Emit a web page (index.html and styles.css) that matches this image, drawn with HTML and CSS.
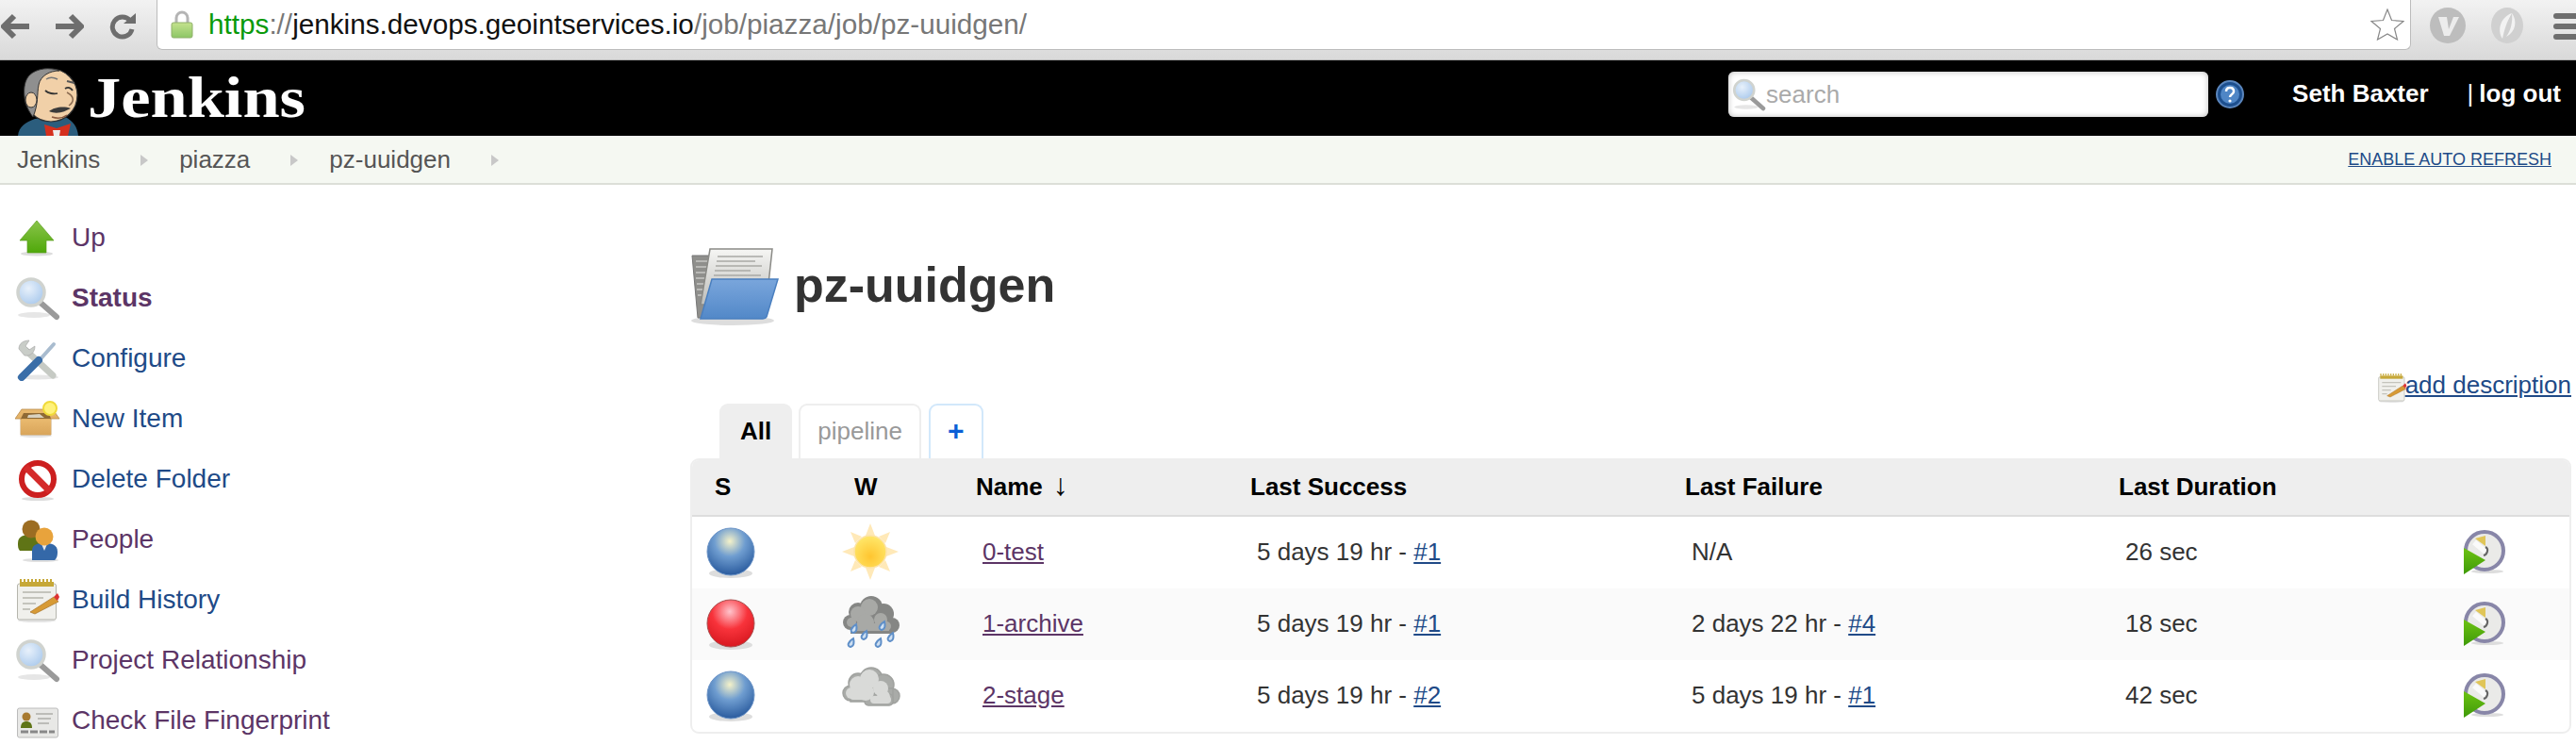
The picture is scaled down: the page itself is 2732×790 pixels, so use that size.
FILE: index.html
```html
<!DOCTYPE html>
<html>
<head>
  <title>pz-uuidgen [Jenkins]</title>
  <link rel="stylesheet" href="styles.css">
</head>
<body>

<svg class="sprite" xmlns="http://www.w3.org/2000/svg">
  <defs>
    <linearGradient id="g-green" x1="0" y1="0" x2="0" y2="1"><stop offset="0" stop-color="#8ac44a"/><stop offset="1" stop-color="#4fa80a"/></linearGradient>
    <linearGradient id="g-play" x1="0" y1="0" x2="0" y2="1"><stop offset="0" stop-color="#6cc212"/><stop offset="1" stop-color="#3f9a08"/></linearGradient>
    <linearGradient id="g-lock" x1="0" y1="0" x2="0" y2="1"><stop offset="0" stop-color="#c4e28e"/><stop offset="1" stop-color="#8cc665"/></linearGradient>
    <linearGradient id="g-paper" x1="0" y1="0" x2="0" y2="1"><stop offset="0" stop-color="#f6f6f4"/><stop offset="1" stop-color="#bdbdb9"/></linearGradient>
    <radialGradient id="g-lens" cx="0.4" cy="0.35" r="0.7"><stop offset="0" stop-color="#e8f1fb"/><stop offset="1" stop-color="#a8c8ec"/></radialGradient>
    <radialGradient id="g-blue" cx="0.48" cy="0.28" r="0.72"><stop offset="0" stop-color="#f5f2c9"/><stop offset="0.45" stop-color="#6f9dd0"/><stop offset="1" stop-color="#2a5b9e"/></radialGradient>
    <radialGradient id="g-red" cx="0.48" cy="0.25" r="0.75"><stop offset="0" stop-color="#ffc4cc"/><stop offset="0.5" stop-color="#f8333b"/><stop offset="1" stop-color="#d81820"/></radialGradient>
    <radialGradient id="g-sun" cx="0.5" cy="0.65" r="0.6"><stop offset="0" stop-color="#ffc530"/><stop offset="1" stop-color="#ffe566"/></radialGradient>
    <linearGradient id="g-folder" x1="0" y1="0" x2="0" y2="1"><stop offset="0" stop-color="#7aa6dc"/><stop offset="1" stop-color="#5288c8"/></linearGradient>
    <linearGradient id="g-box" x1="0" y1="0" x2="0" y2="1"><stop offset="0" stop-color="#e9b96e"/><stop offset="1" stop-color="#d9a55a"/></linearGradient>

    <symbol id="i-up" viewBox="0 0 48 48">
      <ellipse cx="23" cy="41" rx="17" ry="2.5" fill="#ddd"/>
      <path d="M23 6 41 27H33V40H13V27H5Z" fill="url(#g-green)" stroke="#5a9e1c" stroke-width=".7"/>
    </symbol>
    <symbol id="i-search" viewBox="0 0 48 48">
      <ellipse cx="20" cy="42" rx="17" ry="3" fill="#e6e6e6"/>
      <path d="M27 29 44 44" stroke="#9a9a9a" stroke-width="6" stroke-linecap="round"/>
      <circle cx="17" cy="18" r="14" fill="url(#g-lens)" stroke="#d0d3cf" stroke-width="3.5"/>
    </symbol>
    <symbol id="i-configure" viewBox="0 0 48 48">
      <ellipse cx="24" cy="44" rx="22" ry="2.5" fill="#e6e6e6"/>
      <path d="M12 16 40 42" stroke="#c6cac4" stroke-width="7" stroke-linecap="round"/>
      <path d="M4 14C4 8 9 5 15 5L11 11 15 15 21 11C21 18 16 22 10 21Z" fill="#c9cdc8" stroke="#aaa" stroke-width=".7"/>
      <path d="M41 9 24 28" stroke="#a9bccf" stroke-width="4" stroke-linecap="round"/>
      <path d="M25 26 7 44" stroke="#3a6ea8" stroke-width="8" stroke-linecap="round"/>
    </symbol>
    <symbol id="i-new" viewBox="0 0 48 48">
      <ellipse cx="22" cy="42" rx="17" ry="2" fill="#e6e6e6"/>
      <path d="M0 24 7 14H40L47 24H38V41H6V24Z" fill="url(#g-box)" stroke="#b78a4a" stroke-width=".8"/>
      <path d="M9 18H36L38 24H6Z" fill="#8f6a35"/>
      <path d="M14 20 26 19 31 23H13Z" fill="#d9d2c0"/>
      <path d="M6 25H38V41H6Z" fill="url(#g-box)"/>
      <circle cx="37" cy="13" r="7" fill="#fff27a" stroke="#f0da3a" stroke-width="2"/>
    </symbol>
    <symbol id="i-delete" viewBox="0 0 48 48">
      <ellipse cx="24" cy="45" rx="17" ry="2" fill="#ddd"/>
      <circle cx="24" cy="24" r="17" fill="#fff" stroke="#cc1f1f" stroke-width="6"/>
      <path d="M11 11 37 37" stroke="#d42a2a" stroke-width="7"/>
    </symbol>
    <symbol id="i-people" viewBox="0 0 48 48">
      <ellipse cx="27" cy="46" rx="19" ry="2" fill="#e0e0e0"/>
      <path d="M3 28C3 20 10 19 17 19S31 21 31 28V36H5C3 34 3 31 3 28Z" fill="#5f7416"/>
      <circle cx="17" cy="13" r="9.500" fill="#9c6d22"/>
      <path d="M18 46V36C18 29 24 28 31 28S45 29 45 37C45 42 44 44 42 46Z" fill="#3468a8"/>
      <path d="M28 29H34L31 36Z" fill="#e8e8e8"/>
      <circle cx="31" cy="21" r="9.500" fill="#e8a33c"/>
    </symbol>
    <symbol id="i-notepad" viewBox="0 0 48 48">
      <ellipse cx="23" cy="46" rx="20" ry="2" fill="#e4e4e4"/>
      <rect x="2.500" y="7" width="41" height="38" rx="2" fill="#f0f0ec" stroke="#b5b5ad"/>
      <rect x="5" y="5" width="36" height="5" fill="#c6a838"/>
      <path d="M6 5V2M10 5V2M14 5V2M18 5V2M22 5V2M26 5V2M30 5V2M34 5V2M38 5V2" stroke="#c6a838" stroke-width="2"/>
      <path d="M8 16H38M8 22H30M8 28H22M8 34H16" stroke="#c4c4bc" stroke-width="2"/>
      <path d="M16 37 41 21 46 26 21 39Z" fill="#d79a35" stroke="#a8742a" stroke-width=".7"/>
      <path d="M41 21 45 17 47 21 45 25Z" fill="#d33"/>
    </symbol>
    <symbol id="i-card" viewBox="0 0 48 48">
      <rect x="2.500" y="11" width="43" height="31" rx="2" fill="#e8e8e6" stroke="#bbb"/>
      <path d="M6 36H42" stroke="#888" stroke-width="3" stroke-dasharray="8 2"/>
      <circle cx="12" cy="20" r="4.500" fill="#a87a30"/>
      <path d="M6 32C6 26 9 25 12 25S18 26 18 32Z" fill="#5f7416"/>
      <path d="M22 17H40M24 22H38M24 27H36" stroke="#bcbcb8" stroke-width="2"/>
    </symbol>
    <symbol id="i-folder" viewBox="0 0 94 82">
      <ellipse cx="45" cy="77" rx="44" ry="5" fill="#ddd"/>
      <path d="M2 8H22L24 74H8Z" fill="#8f8f8c" stroke="#777"/>
      <path d="M6 14H22M6 20H22M6 26H20M6 32H20M7 38H20M7 44H20M8 50H20" stroke="#c8c8c4" stroke-width="1.500"/>
      <path d="M21 1H87L83 38 45 60H11Z" fill="url(#g-paper)" stroke="#8a8a86" stroke-width="1.500"/>
      <path d="M29 9H77M28 14H69M27 19H76M26 24H64M25 29H75" stroke="#a9a9a5" stroke-width="1.500"/>
      <path d="M23 33H93L81 73C80 75 79 75 77 75H11Z" fill="url(#g-folder)" stroke="#4a7fbf" stroke-width="1.500"/>
    </symbol>
    <symbol id="i-ball-blue" viewBox="0 0 52 56">
      <ellipse cx="26" cy="49" rx="23" ry="5" fill="#ddd"/>
      <circle cx="26" cy="26" r="25" fill="url(#g-blue)" stroke="#6d95c8"/>
    </symbol>
    <symbol id="i-ball-red" viewBox="0 0 52 56">
      <ellipse cx="26" cy="49" rx="23" ry="5" fill="#ddd"/>
      <circle cx="26" cy="26" r="25" fill="url(#g-red)" stroke="#a85050"/>
    </symbol>
    <symbol id="i-sun" viewBox="0 0 60 60">
      <g fill="#ffe9b8">
        <path d="M30 0 35 13H25Z"/><path d="M30 60 25 47H35Z"/><path d="M0 30 13 25V35Z"/><path d="M60 30 47 35V25Z"/>
        <path d="M9 9 21 14 14 21Z"/><path d="M51 9 46 21 39 14Z"/><path d="M9 51 14 39 21 46Z"/><path d="M51 51 39 46 46 39Z"/>
      </g>
      <circle cx="30" cy="30" r="17" fill="url(#g-sun)" stroke="#fde3a6" stroke-width="1.500"/>
    </symbol>
    <symbol id="i-cloud" viewBox="0 0 62 48">
      <g fill="#a9aba8" stroke="#a0a29f" stroke-width="1.500">
        <circle cx="31" cy="14" r="12"/><circle cx="17" cy="18" r="10"/><circle cx="44" cy="20" r="11"/><circle cx="9" cy="29" r="8"/><circle cx="53" cy="32" r="8"/><rect x="9" y="24" width="45" height="14"/><rect x="24" y="30" width="30" height="12" rx="4"/>
      </g>
      <g fill="#d9dad8">
        <circle cx="29" cy="14" r="10"/><circle cx="17" cy="20" r="9"/><circle cx="10" cy="29" r="6"/><circle cx="25" cy="28" r="9"/><circle cx="41" cy="24" r="8"/><circle cx="44" cy="33" r="7"/><rect x="30" y="32" width="22" height="8" rx="4"/><rect x="8" y="27" width="20" height="9" rx="4"/>
      </g>
    </symbol>
    <symbol id="i-storm" viewBox="0 0 62 60">
      <g fill="#858684">
        <circle cx="31" cy="13" r="12"/><circle cx="17" cy="18" r="10"/><circle cx="44" cy="20" r="11"/><circle cx="9" cy="29" r="8"/><circle cx="53" cy="32" r="8"/><rect x="9" y="24" width="45" height="17"/>
      </g>
      <g fill="#a8a9a6">
        <circle cx="29" cy="13" r="9"/><circle cx="17" cy="20" r="8"/><circle cx="10" cy="29" r="5"/><circle cx="25" cy="29" r="9"/><circle cx="41" cy="26" r="7"/><circle cx="47" cy="33" r="5"/><rect x="10" y="30" width="40" height="8"/>
      </g>
      <g fill="#cfe0f2" stroke="#5f8fc8" stroke-width="2">
        <path d="M15 31C16 35 16 39 12 40 8 39 9 35 15 31Z"/>
        <path d="M45 28C46 32 46 36 42 37 38 36 39 32 45 28Z"/>
        <path d="M26 38C27 42 27 46 23 47 19 46 20 42 26 38Z"/>
        <path d="M54 40C55 44 55 48 51 49 47 48 48 44 54 40Z"/>
        <path d="M12 46C13 50 13 54 9 55 5 54 6 50 12 46Z"/>
        <path d="M41 46C42 50 42 54 38 55 34 54 35 50 41 46Z"/>
      </g>
    </symbol>
    <symbol id="i-build" viewBox="0 0 46 48">
      <ellipse cx="26" cy="45" rx="17" ry="2" fill="#ddd"/>
      <circle cx="23" cy="23" r="20" fill="#eaeae8" stroke="#8886a8" stroke-width="4"/>
      <path d="M13 10 24 7V18Z" fill="#e0c558"/>
      <path d="M12 14 24 24" stroke="#fafafa" stroke-width="6"/>
      <path d="M24 19C28 21 26 27 22 28" fill="none" stroke="#666" stroke-width="2"/>
      <path d="M1 20 24 33 1 48Z" fill="url(#g-play)"/>
    </symbol>
    <symbol id="i-help" viewBox="0 0 30 30">
      <circle cx="15" cy="15" r="14" fill="#1d4f8e" stroke="#5b86bd" stroke-width="2"/>
      <circle cx="15" cy="15" r="10" fill="#4f86c6"/>
      <path d="M11 12C11 9 13 8 15 8S19 9 19 12C19 15 15 15 15 18" fill="none" stroke="#fff" stroke-width="2.500"/>
      <circle cx="15" cy="22" r="1.600" fill="#fff"/>
    </symbol>
  </defs>
</svg>

<div class="toolbar">
  <svg class="nav-icon" viewBox="0 0 32 28"><path d="M14 3 3 14 14 25M4 14H30" fill="none" stroke="#6e6e6e" stroke-width="6"/></svg>
  <svg class="nav-icon" viewBox="0 0 32 28"><path d="M18 3 29 14 18 25M28 14H2" fill="none" stroke="#6e6e6e" stroke-width="6"/></svg>
  <svg class="nav-icon reload" viewBox="0 0 28 28"><path d="M22 8A10.500 10.500 0 1 0 24 17" fill="none" stroke="#6e6e6e" stroke-width="5"/><path d="M15 11H28V0Z" fill="#6e6e6e"/></svg>
  <div class="urlbox">
    <svg class="lock" viewBox="0 0 24 30"><path d="M6 14V8A6 6 0 0 1 18 8V14" fill="none" stroke="#b4b4b4" stroke-width="3"/><rect x="1" y="13" width="22" height="16" rx="2" fill="url(#g-lock)" stroke="#8fb06a"/></svg>
    <span class="url"><span class="url-https">https</span><span class="url-path">://</span>jenkins.devops.geointservices.io<span class="url-path">/job/piazza/job/pz-uuidgen/</span></span>
    <svg class="star" viewBox="0 0 36 34"><path d="M18 1 22.500 12.500 35 13.500 25.500 21.500 28.500 33 18 27 7.500 33 10.500 21.500 1 13.500 13.500 12.500Z" fill="#fff" stroke="#888" stroke-width="1.200"/></svg>
  </div>
  <svg class="ext" viewBox="0 0 38 38"><circle cx="19" cy="19" r="19" fill="#bdbdbd"/><path d="M9 10H18L20 23 25 10H31L21 30H15Z" fill="#ececec"/></svg>
  <svg class="ext" viewBox="0 0 38 38"><ellipse cx="19" cy="19" rx="17" ry="19" fill="#d0d0d0"/><path d="M24 6C12 10 8 24 14 33 16 24 18 16 24 6Z" fill="#f2f2f2"/><path d="M24 6C30 14 28 26 18 31 23 24 25 15 24 6Z" fill="#f2f2f2"/></svg>
  <div class="menu"><span></span><span></span><span></span></div>
</div>

<div class="header">
  <svg class="butler" viewBox="0 0 64 72">
    <path d="M0 72C1 62 8 58 18 54L50 52C58 56 63 62 64 72Z" fill="#2b5d7d"/>
    <ellipse cx="35" cy="29" rx="28" ry="28" fill="#f1d0a8" stroke="#333" stroke-width="1.200"/>
    <path d="M16 52C6 40 3 18 12 8 20 0 34 -1 44 3 34 3 24 8 22 18 20 28 22 38 16 52Z" fill="#8f8f8f" stroke="#333"/>
    <ellipse cx="14" cy="34" rx="6" ry="8" fill="#f1d0a8" stroke="#333"/>
    <path d="M29 24C32 27 38 28 42 27M50 22C53 20 56 21 58 24" fill="none" stroke="#333" stroke-width="1.800"/>
    <path d="M52 14 60 16" stroke="#555" stroke-width="2"/>
    <path d="M30 12C33 10 38 10 42 12" fill="none" stroke="#777" stroke-width="1.500"/>
    <path d="M52 26C60 30 60 36 54 40" fill="none" stroke="#8a6a50" stroke-width="1.500"/>
    <path d="M33 46C38 42 48 40 56 43 50 46 42 50 33 46Z" fill="#3a3a3a"/>
    <path d="M36 52C42 54 48 53 52 50" fill="none" stroke="#8a5a40" stroke-width="1.500"/>
    <path d="M28 60 41 64 56 59 53 72H30Z" fill="#d5301e"/>
    <path d="M37 66H45L44 72H38Z" fill="#eee"/>
  </svg>
  <div class="title">Jenkins</div>
  <div class="header-right">
    <div class="searchbox">
      <svg class="search-icon" viewBox="0 0 48 48"><use href="#i-search"/></svg>
      <span>search</span>
    </div>
    <svg class="help" viewBox="0 0 30 30"><use href="#i-help"/></svg>
    <span class="user">Seth Baxter</span>
    <span class="logout"><span class="pipe">|</span>log out</span>
  </div>
</div>

<div class="breadcrumbs">
  <span class="crumb">Jenkins</span><i class="sep"></i>
  <span class="crumb">piazza</span><i class="sep"></i>
  <span class="crumb">pz-uuidgen</span><i class="sep"></i>
  <a class="refresh" href="#">ENABLE AUTO REFRESH</a>
</div>

<div class="page">
  <div class="side">
    <div class="task"><svg class="task-icon"><use href="#i-up"/></svg><span class="visited">Up</span></div>
    <div class="task"><svg class="task-icon"><use href="#i-search"/></svg><span class="visited bold">Status</span></div>
    <div class="task"><svg class="task-icon"><use href="#i-configure"/></svg><span class="link">Configure</span></div>
    <div class="task"><svg class="task-icon"><use href="#i-new"/></svg><span class="link">New Item</span></div>
    <div class="task"><svg class="task-icon"><use href="#i-delete"/></svg><span class="link">Delete Folder</span></div>
    <div class="task"><svg class="task-icon"><use href="#i-people"/></svg><span class="visited">People</span></div>
    <div class="task"><svg class="task-icon"><use href="#i-notepad"/></svg><span class="link">Build History</span></div>
    <div class="task"><svg class="task-icon"><use href="#i-search"/></svg><span class="visited">Project Relationship</span></div>
    <div class="task"><svg class="task-icon"><use href="#i-card"/></svg><span class="visited">Check File Fingerprint</span></div>
  </div>

  <div class="main">
    <div class="job-title">
      <svg class="folder"><use href="#i-folder"/></svg>
      <h1>pz-uuidgen</h1>
    </div>

    <div class="description">
      <svg class="desc-icon" viewBox="0 0 48 48"><use href="#i-notepad"/></svg><a href="#">add description</a>
    </div>

    <div class="tabs">
      <div class="tab active">All</div>
      <div class="tab">pipeline</div>
      <div class="tab add">+</div>
    </div>

    <div class="projects">
      <table>
        <colgroup>
          <col class="c-s"><col class="c-w"><col class="c-name"><col class="c-success"><col class="c-failure"><col class="c-duration"><col>
        </colgroup>
        <thead>
          <tr><th>S</th><th>W</th><th>Name <span class="arrow">↓</span></th><th>Last Success</th><th>Last Failure</th><th>Last Duration</th><th></th></tr>
        </thead>
        <tbody>
          <tr>
            <td class="ico-s"><svg class="ball"><use href="#i-ball-blue"/></svg></td>
            <td class="ico-w"><svg class="weather sun"><use href="#i-sun"/></svg></td>
            <td><a class="visited" href="#">0-test</a></td>
            <td>5 days 19 hr - <a href="#">#1</a></td>
            <td>N/A</td>
            <td>26 sec</td>
            <td class="ico-b"><svg class="build"><use href="#i-build"/></svg></td>
          </tr>
          <tr class="odd">
            <td class="ico-s"><svg class="ball"><use href="#i-ball-red"/></svg></td>
            <td class="ico-w"><svg class="weather storm"><use href="#i-storm"/></svg></td>
            <td><a class="visited" href="#">1-archive</a></td>
            <td>5 days 19 hr - <a href="#">#1</a></td>
            <td>2 days 22 hr - <a href="#">#4</a></td>
            <td>18 sec</td>
            <td class="ico-b"><svg class="build"><use href="#i-build"/></svg></td>
          </tr>
          <tr>
            <td class="ico-s"><svg class="ball"><use href="#i-ball-blue"/></svg></td>
            <td class="ico-w"><svg class="weather cloud"><use href="#i-cloud"/></svg></td>
            <td><a class="visited" href="#">2-stage</a></td>
            <td>5 days 19 hr - <a href="#">#2</a></td>
            <td>5 days 19 hr - <a href="#">#1</a></td>
            <td>42 sec</td>
            <td class="ico-b"><svg class="build"><use href="#i-build"/></svg></td>
          </tr>
        </tbody>
      </table>
    </div>
  </div>
</div>

</body>
</html>
```

FILE: styles.css
```css
html, body {
  margin: 0;
  height: 100%;
  overflow: hidden;
  background: #fff;
}
body {
  font-family: "Liberation Sans", Arial, sans-serif;
  font-size: 26px;
  color: #333;
}
svg { display: block; flex: none; }
.sprite { width: 0; height: 0; }
a { color: #204a87; }

/* browser bar */
.toolbar {
  height: 63px;
  border-bottom: 1px solid #b4b4b4;
  background: linear-gradient(#f2f2f2, #d9d9d9);
  display: flex;
  align-items: flex-start;
}
.nav-icon { width: 32px; height: 28px; margin: 14px 0 0 1px; }
.nav-icon + .nav-icon { margin-left: 24px; }
.nav-icon.reload { width: 28px; margin-left: 27px; }
.urlbox {
  width: 2391px;
  height: 52px;
  margin-left: 22px;
  background: #fff;
  border: 1px solid #bcbcbc;
  border-top: 0;
  border-radius: 0 0 6px 6px;
  display: flex;
  align-items: center;
}
.lock { width: 24px; height: 30px; margin-left: 14px; }
.url { margin-left: 16px; font-size: 29.7px; color: #111; flex: 1; }
.url-https { color: #0a9a0a; }
.url-path { color: #777; }
.star { width: 36px; height: 34px; margin-right: 6px; }
.ext { width: 38px; height: 38px; margin: 8px 0 0 20px; }
.ext + .ext { margin-left: 25px; }
.menu { width: 24px; margin: 14px 0 0 30px; display: flex; flex-direction: column; gap: 5px; }
.menu span { height: 6px; background: #6e6e6e; border-radius: 3px 0 0 3px; }

/* black header */
.header {
  height: 80px;
  background: #000;
  display: flex;
  align-items: flex-end;
  color: #fff;
}
.butler { width: 64px; height: 72px; margin-left: 19px; }
.title {
  font-family: "Liberation Serif", serif;
  font-weight: bold;
  font-size: 61px;
  line-height: 72px;
  margin: 0 0 4px 10px;
  transform: scaleX(1.155);
  transform-origin: left;
}
.header-right {
  margin-left: auto;
  height: 80px;
  display: flex;
  align-items: center;
  font-weight: bold;
  padding-right: 16px;
}
.searchbox {
  width: 509px;
  height: 48px;
  box-sizing: border-box;
  background: #fff;
  border-radius: 6px;
  box-shadow: inset 0 0 6px #bbb;
  display: flex;
  align-items: center;
  padding-left: 4px;
  color: #aaa;
  font-weight: normal;
  margin-top: -8px;
}
.search-icon { width: 36px; height: 36px; }
.help { width: 30px; height: 30px; margin: -8px 0 0 8px; }
.user { margin: -10px 0 0 51px; }
.logout { margin: -10px 0 0 41px; }
.pipe { font-weight: normal; margin-right: 6px; }

/* breadcrumb bar */
.breadcrumbs {
  height: 50px;
  background: #f5f8f2;
  border-bottom: 2px solid #dcdfd8;
  display: flex;
  align-items: center;
  padding: 0 26px 0 18px;
  color: #555;
}
.sep {
  width: 0;
  height: 0;
  border-left: 8px solid #c8c8c8;
  border-top: 6px solid transparent;
  border-bottom: 6px solid transparent;
  margin: 2px 33px 0 43px;
}
.refresh { margin-left: auto; font-size: 18px; }

/* page */
.page { display: flex; }
.side { width: 732px; flex: none; padding-top: 24px; box-sizing: border-box; font-size: 28px; }
.task { height: 64px; display: flex; align-items: center; padding-left: 16px; gap: 12px; }
.task-icon { width: 48px; height: 48px; }
.visited { color: #5c3566; }
.link { color: #204a87; }
.bold { font-weight: bold; }

.main { flex: 1; margin-right: 5px; }
.job-title { display: flex; align-items: center; margin-top: 67px; height: 82px; gap: 16px; }
.folder { width: 94px; height: 82px; }
h1 { margin: 0 0 3px; font-size: 52px; line-height: 79px; }
.description {
  margin-top: 50px;
  height: 33px;
  display: flex;
  justify-content: flex-end;
  align-items: flex-start;
  line-height: 27px;
}
.desc-icon { width: 32px; height: 32px; margin-right: -2px; }

.tabs { display: flex; gap: 7px; margin-left: 31px; height: 58px; }
.tab {
  box-sizing: border-box;
  height: 59px;
  padding: 0 18px;
  border: 2px solid #eee;
  border-bottom: 0;
  border-radius: 9px 9px 0 0;
  color: #999;
  line-height: 54px;
}
.tab.active { background: #eee; color: #000; font-weight: bold; padding: 0 20px; }
.tab.add { width: 58px; padding: 0; text-align: center; color: #0b5fd6; font-weight: bold; border-color: #d2e8fb; margin-left: 1px; font-size: 30px; }

.projects {
  border: 2px solid #eee;
  border-radius: 9px;
  overflow: hidden;
  position: relative;
}
table { width: 100%; border-collapse: collapse; table-layout: fixed; }
.c-s { width: 148px; }
.c-w { width: 129px; }
.c-name { width: 291px; }
.c-success { width: 461px; }
.c-failure { width: 460px; }
.c-duration { width: 372px; }
th {
  height: 56px;
  padding: 0 0 2px 24px;
  background: #eee;
  border-bottom: 2px solid #ddd;
  color: #000;
  text-align: left;
}
.arrow { font-weight: normal; font-size: 32px; line-height: 26px; margin-left: 4px; }
td { height: 74px; padding: 0 0 2px 31px; }
tr.odd td { background: #fafafa; }
td.ico-s { padding-left: 15px; }
td.ico-w { padding-left: 11px; }
td.ico-b { padding-left: 17px; }
.ball { width: 52px; height: 56px; margin-top: 3px; }
.weather { width: 62px; }
.sun { width: 60px; height: 60px; }
.storm { height: 60px; }
.cloud { height: 48px; margin-bottom: 14px; }
.build { width: 46px; height: 48px; }
```
